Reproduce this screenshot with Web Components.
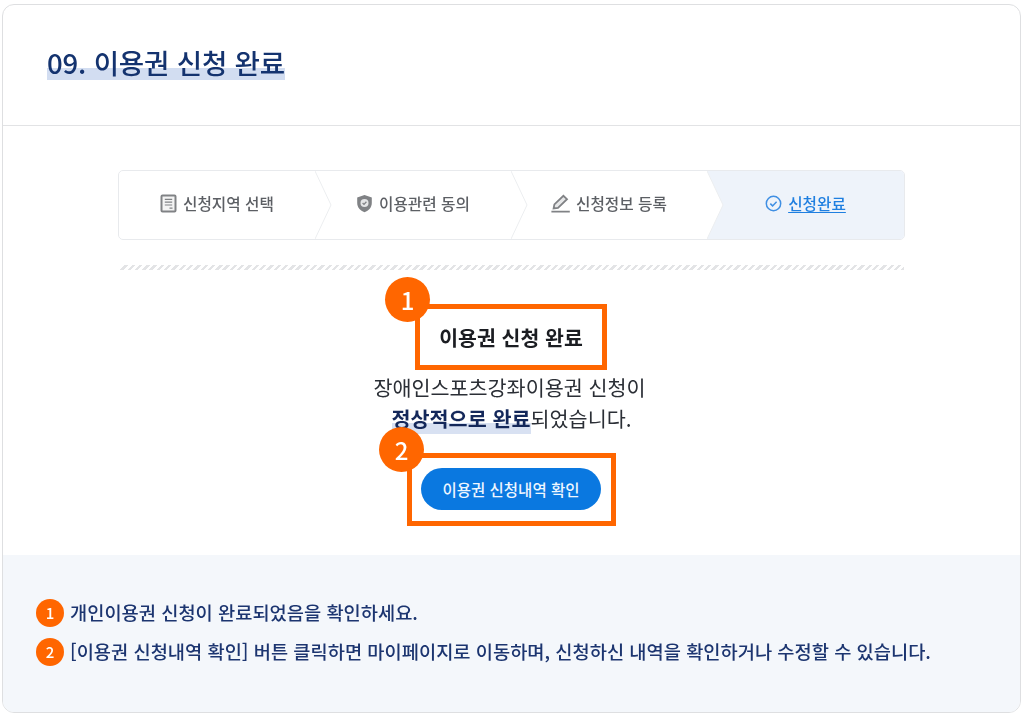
<!DOCTYPE html>
<html lang="ko">
<head>
<meta charset="utf-8">
<title>이용권 신청 완료</title>
<style>
  html, body { margin: 0; background: #fff; }
  body { padding: 4px 2px 2px; font-family: "Noto Sans CJK KR", "Noto Sans", sans-serif; }
</style>
</head>
<body>
<guide-card>
  <span slot="title">09. 이용권 신청 완료</span>
  <step-bar></step-bar>
  <done-panel></done-panel>
  <span slot="notes">
    <note-row num="1">개인이용권 신청이 완료되었음을 확인하세요.</note-row>
    <note-row num="2">[이용권 신청내역 확인] 버튼 클릭하면 마이페이지로 이동하며, 신청하신 내역을 확인하거나 수정할 수 있습니다.</note-row>
  </span>
</guide-card>

<script>
class GuideCard extends HTMLElement {
    constructor() {
        super();
        const shadow = this.attachShadow({ mode: 'open' });
        shadow.innerHTML = `
            <style>
                :host {
                    display: block;
                    height: 709px;
                    box-sizing: border-box;
                    border: 1px solid #dedfe1;
                    border-radius: 12px;
                    overflow: hidden;
                    background: #fff;
                    /* the reference is a slightly soft, upscaled capture */
                    filter: blur(0.4px);
                }
                header {
                    height: 121px;
                    box-sizing: border-box;
                    border-bottom: 1px solid #e2e3e5;
                    padding: 37px 0 0 44px;
                }
                h1 {
                    display: inline-block;
                    margin: 0;
                    font-size: 27.6px;
                    line-height: 40px;
                    font-weight: 500;
                    color: #14336f;
                    letter-spacing: -0.2px;
                    background: linear-gradient(transparent 26px, #d2ddf1 26px, #d2ddf1 38px, transparent 38px);
                }
                main {
                    height: 429px;
                    box-sizing: border-box;
                    padding: 44px 115px 0;
                }
                footer {
                    height: 157px;
                    box-sizing: border-box;
                    background: #f4f7fb;
                    padding: 44px 33px 0;
                }
            </style>
            <header><h1><slot name="title"></slot></h1></header>
            <main><slot></slot></main>
            <footer><slot name="notes"></slot></footer>
        `;
    }
}

class StepBar extends HTMLElement {
    constructor() {
        super();
        const shadow = this.attachShadow({ mode: 'open' });
        shadow.innerHTML = `
            <style>
                :host {
                    display: block;
                    color: #5c5f64;
                    font-size: 15.7px;
                    font-weight: 500;
                }
                .bar {
                    position: relative;
                    display: flex;
                    height: 70px;
                    box-sizing: border-box;
                    border: 1px solid #e8eaed;
                    border-radius: 5px;
                    overflow: hidden;
                }
                .step {
                    position: relative;
                    width: 196px;
                    display: flex;
                    align-items: center;
                    justify-content: center;
                    gap: 6px;
                    padding: 0 0 3px 0;
                    box-sizing: border-box;
                }
                .step svg.icon { flex: none; }
                .chev {
                    position: absolute;
                    top: 0;
                    right: -17px;
                    width: 17px;
                    height: 68px;
                    z-index: 1;
                }
                .active {
                    flex: 1;
                    color: #1f7fe0;
                    padding: 0;
                }
                .active-bg {
                    position: absolute;
                    inset: 0;
                    background: #eef3fa;
                    clip-path: polygon(0 0, 100% 0, 100% 100%, 0 100%, 16px 50%);
                }
                .active span { text-decoration: underline; text-underline-offset: 2px; }
                .active .inner { position: relative; display: flex; align-items: center; gap: 6px; margin: 0 0 3px 0; }
                .rule {
                    height: 5px;
                    margin: 25px 1px 0 2px;
                    background: repeating-linear-gradient(-45deg, #e3e4e6 0 2.4px, transparent 2.4px 5.16px);
                }
            </style>
            <div class="bar">
                <div class="step">
                    <svg class="icon" width="17" height="19" viewBox="0 0 17 19" fill="#f4f4f4" stroke="#808285" stroke-width="2">
                        <rect x="1.5" y="1.5" width="14" height="16" rx="1"/>
                        <path stroke-width="1.2" d="M4.8 5.4h7.4M4.8 8.2h7.4M4.8 11h7.4M9.5 14.2h3"/>
                    </svg>
                    <span>신청지역 선택</span>
                    <svg class="chev" viewBox="0 0 17 68" fill="none" stroke="#eceef0"><path d="M0 0L16 34L0 68"/></svg>
                </div>
                <div class="step">
                    <svg class="icon" width="17" height="19" viewBox="0 0 17 19">
                        <path fill="#808285" d="M8.5 1L15.8 3.4V9C15.8 13.4 12.8 16.6 8.5 18.2C4.2 16.6 1.2 13.4 1.2 9V3.4Z"/>
                        <circle cx="8.5" cy="9" r="4" fill="#e4e5e6"/>
                        <path d="M6.6 9l1.4 1.4 2.4-2.6" fill="none" stroke="#808285" stroke-width="1.3"/>
                    </svg>
                    <span>이용관련 동의</span>
                    <svg class="chev" viewBox="0 0 17 68" fill="none" stroke="#eceef0"><path d="M0 0L16 34L0 68"/></svg>
                </div>
                <div class="step">
                    <svg class="icon" width="19" height="19" viewBox="0 0 19 19" fill="#e6e7e8" stroke="#808285" stroke-width="1.8">
                        <path d="M2.6 14.4L3.4 10.4L12.4 1.8L16 5.2L7 14Z"/>
                        <path stroke-width="1.6" d="M0.4 17.6H18.8"/>
                    </svg>
                    <span>신청정보 등록</span>
                    <svg class="chev" viewBox="0 0 17 68" fill="none" stroke="#eceef0"><path d="M0 0L16 34L0 68"/></svg>
                </div>
                <div class="step active">
                    <div class="active-bg"></div>
                    <div class="inner">
                        <svg class="icon" width="17" height="17" viewBox="0 0 17 17" fill="none" stroke="#3f8fe3" stroke-width="1.5">
                            <circle cx="8.5" cy="8.5" r="7.2"/>
                            <path d="M5.3 8.6l2.3 2.3 4-4.2"/>
                        </svg>
                        <span>신청완료</span>
                    </div>
                </div>
            </div>
            <div class="rule"></div>
        `;
    }
}

class DonePanel extends HTMLElement {
    constructor() {
        super();
        const shadow = this.attachShadow({ mode: 'open' });
        shadow.innerHTML = `
            <style>
                :host {
                    display: flex;
                    flex-direction: column;
                    align-items: center;
                    margin-top: 34px;
                    color: #2b2f36;
                }
                .mark {
                    position: relative;
                    box-sizing: border-box;
                    border: 5px solid #ff6600;
                }
                .badge {
                    position: absolute;
                    width: 45px;
                    height: 45px;
                    border-radius: 50%;
                    background: #ff6600;
                    color: #fff;
                    font-size: 24px;
                    font-weight: 500;
                    line-height: 45px;
                    text-align: center;
                }
                .head {
                    width: 192px;
                    height: 66px;
                    margin-right: 1px;
                    display: flex;
                    align-items: center;
                    justify-content: center;
                    font-size: 20.5px;
                    font-weight: 700;
                    color: #1b1d22;
                    white-space: nowrap;
                }
                .head .badge { left: -35px; top: -32px; }
                p {
                    margin: 2px 0 0;
                    font-size: 20.7px;
                    line-height: 31px;
                    text-align: center;
                    white-space: nowrap;
                }
                p .first { margin-right: 4px; }
                b {
                    font-weight: 700;
                    color: #14285a;
                    background: linear-gradient(transparent 20px, #d8e1f2 20px, #d8e1f2 31px);
                    display: inline-block;
                    height: 31px;
                }
                .action {
                    width: 209px;
                    height: 73px;
                    margin: 19px 0 0;
                    display: flex;
                    align-items: center;
                    justify-content: center;
                }
                .action .badge { left: -33px; top: -31px; }
                button {
                    width: 180px;
                    height: 42px;
                    margin: 0 1px 2px 0;
                    border: 0;
                    padding: 0;
                    border-radius: 21px;
                    background: #0a78e0;
                    color: #eef6ff;
                    font: 500 15.5px "Noto Sans CJK KR", "Noto Sans", sans-serif;
                    white-space: nowrap;
                }
            </style>
            <div class="mark head"><span class="badge">1</span>이용권 신청 완료</div>
            <p><span class="first">장애인스포츠강좌이용권 신청이</span><br><b>정상적으로 완료</b>되었습니다.</p>
            <div class="mark action"><span class="badge">2</span><button type="button">이용권 신청내역 확인</button></div>
        `;
    }
}

class NoteRow extends HTMLElement {
    constructor() {
        super();
        const shadow = this.attachShadow({ mode: 'open' });
        shadow.innerHTML = `
            <style>
                :host {
                    display: flex;
                    align-items: center;
                    gap: 6px;
                    height: 28px;
                    margin-bottom: 11px;
                    font-size: 18.7px;
                    font-weight: 500;
                    color: #1c3570;
                    white-space: nowrap;
                }
                i {
                    flex: none;
                    width: 28px;
                    height: 28px;
                    border-radius: 50%;
                    background: #ff6600;
                    color: #fff;
                    font-style: normal;
                    font-size: 15px;
                    line-height: 28px;
                    text-align: center;
                }
                span { padding-bottom: 3px; }
            </style>
            <i></i><span><slot></slot></span>
        `;
        shadow.querySelector('i').textContent = this.getAttribute('num');
    }
}

customElements.define('guide-card', GuideCard);
customElements.define('step-bar', StepBar);
customElements.define('done-panel', DonePanel);
customElements.define('note-row', NoteRow);
</script>
</body>
</html>
